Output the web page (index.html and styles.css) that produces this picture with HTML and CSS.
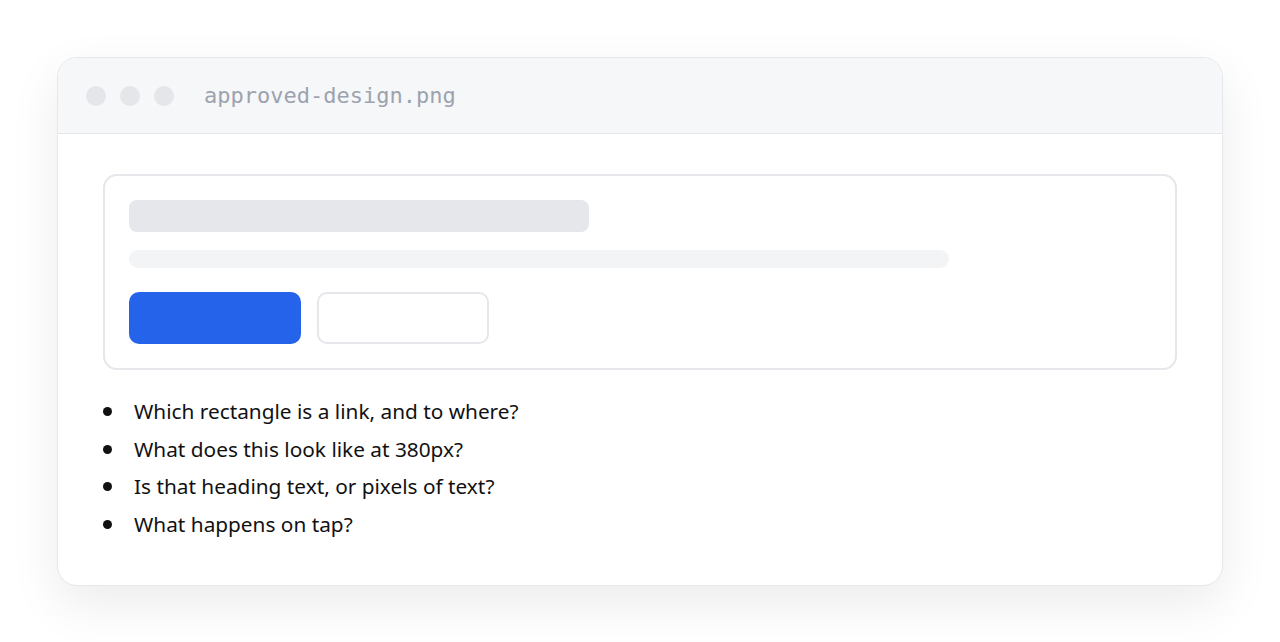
FILE: index.html
```html
<!DOCTYPE html>
<html lang="en">
<head>
    <meta charset="UTF-8">
    <meta name="viewport" content="width=device-width, initial-scale=1.0">
    <title>approved-design.png</title>
    <link rel="stylesheet" href="styles.css">
</head>
<body>

    <div class="window">
        <div class="titlebar">
            <span class="dot"></span>
            <span class="dot"></span>
            <span class="dot"></span>
            <span class="filename">approved-design.png</span>
        </div>

        <div class="window-body">
            <!-- maquette : des blocs gris, aucun vrai contenu -->
            <div class="mock-card">
                <div class="sk-title"></div>
                <div class="sk-line"></div>
                <div class="sk-actions">
                    <div class="sk-btn primary"></div>
                    <div class="sk-btn ghost"></div>
                </div>
            </div>

            <ul class="questions">
                <li>Which rectangle is a link, and to where?</li>
                <li>What does this look like at 380px?</li>
                <li>Is that heading text, or pixels of text?</li>
                <li>What happens on tap?</li>
            </ul>
        </div>
    </div>

</body>
</html>
```

FILE: styles.css
```css
body {
    margin: 0;
    padding: 57px;
    background: #fff;
    font-family: "Noto Sans", "Open Sans", sans-serif;
}
.window {
    border: 1px solid #e5e7eb;
    border-radius: 20px;
    background: #fff;
    overflow: hidden;
    box-shadow: 0 18px 50px rgba(0, 0, 0, 0.08);
}
.titlebar {
    display: flex;
    align-items: center;
    height: 75px;
    padding-left: 28px;
    background: #f6f7f9;
    border-bottom: 1px solid #e5e7eb;
}
.dot {
    width: 20px;
    height: 20px;
    margin-right: 14px;
    border-radius: 50%;
    background: #e4e6ea;
}
.filename {
    margin-left: 16px;
    font-family: "DejaVu Sans Mono", "Liberation Mono", monospace;
    font-size: 22px;
    color: #9ca3af;
}
.window-body {
    padding: 40px 45px 42px;
}
.mock-card {
    padding: 24px;
    border: 2px solid #e5e7eb;
    border-radius: 14px;
}
.sk-title {
    width: 460px;
    height: 32px;
    border-radius: 8px;
    background: #e5e7eb;
}
.sk-line {
    width: 820px;
    height: 18px;
    margin-top: 18px;
    border-radius: 9px;
    background: #f3f4f6;
}
.sk-actions {
    display: flex;
    gap: 16px;
    margin-top: 24px;
}
.sk-btn {
    width: 172px;
    height: 52px;
    box-sizing: border-box;
    border-radius: 10px;
}
.sk-btn.primary {
    background: #2563eb;
}
.sk-btn.ghost {
    border: 2px solid #e5e7eb;
}
.questions {
    margin: 23px 0 0;
    padding: 0;
    list-style: none;
    font-size: 20.8px;
    line-height: 37.5px;
    color: #111;
}
.questions li {
    display: flex;
    align-items: center;
}
/* puce ronde, plus grosse que le disque par défaut */
.questions li::before {
    content: "";
    flex: none;
    width: 9px;
    height: 9px;
    margin: 0 22px 0 0;
    border-radius: 50%;
    background: #111;
}
```
